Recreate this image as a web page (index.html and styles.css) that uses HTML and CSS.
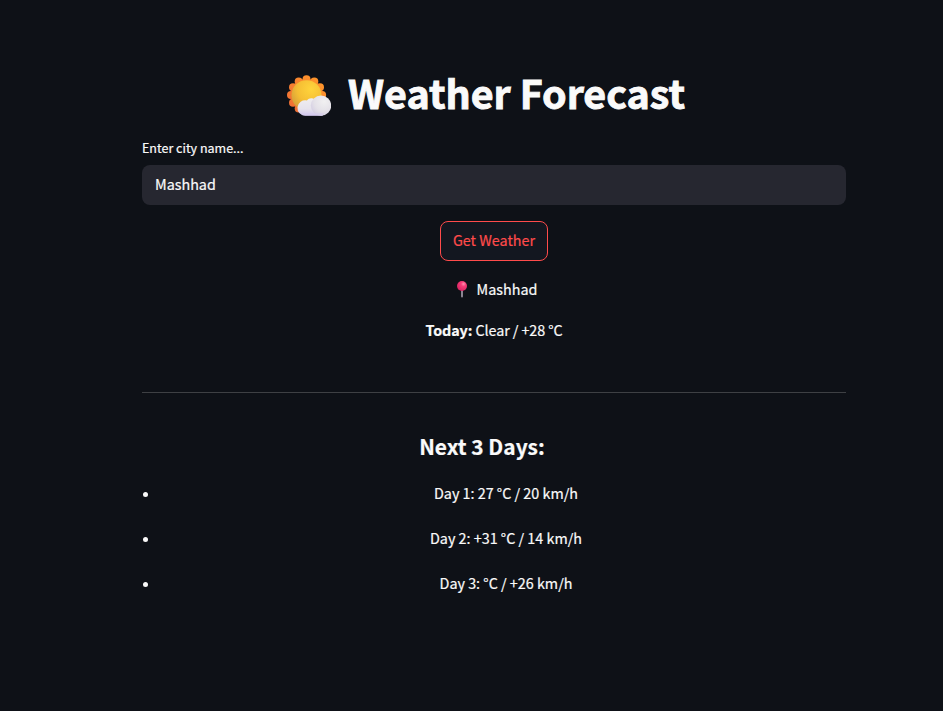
FILE: index.html
```html
<!DOCTYPE html>
<html lang="en">
<head>
<meta charset="utf-8">
<title>Weather Forecast</title>
<link rel="stylesheet" href="styles.css">
</head>
<body>
<main class="page">
  <h1 class="title">
    <svg class="sun" viewBox="0 0 44 42" aria-hidden="true">
      <defs>
        <radialGradient id="disc" cx=".65" cy=".3" r=".75"><stop offset="0" stop-color="#ffd43c"/><stop offset=".6" stop-color="#f5be34"/><stop offset="1" stop-color="#d5a03a"/></radialGradient>
        <linearGradient id="rays" gradientUnits="userSpaceOnUse" x1="4" y1="36" x2="34" y2="6"><stop offset="0" stop-color="#ef6c34"/><stop offset="1" stop-color="#ff962b"/></linearGradient>
        <linearGradient id="base" x1="0" y1="0" x2="0" y2="1"><stop offset="0" stop-color="#efedf1"/><stop offset=".6" stop-color="#e6e3ec"/><stop offset="1" stop-color="#d2c7ef"/></linearGradient>
        <radialGradient id="puff" cx=".65" cy=".3" r=".8"><stop offset="0" stop-color="#f1f0f1"/><stop offset=".6" stop-color="#e4e1e8"/><stop offset="1" stop-color="#d2cbe2"/></radialGradient>
      </defs>
      <g fill="url(#rays)">
        <circle cx="19.5" cy="20" r="16"/>
        <circle cx="19.5" cy="4.300" r="4"/><circle cx="27.300" cy="6.400" r="4"/><circle cx="33" cy="12.200" r="4"/><circle cx="35.100" cy="20" r="4"/><circle cx="11.700" cy="6.400" r="4"/><circle cx="6" cy="12.200" r="4"/><circle cx="4" cy="20" r="4"/><circle cx="6" cy="27.800" r="4"/><circle cx="11.700" cy="33.500" r="4"/>
      </g>
      <circle cx="19.5" cy="20.200" r="15" fill="url(#disc)"/>
      <path fill="url(#base)" d="M18.500 40.800A7.800 7.800 0 1 1 20 25.400C22 22.500 26 22.500 28 25L36 40.800Z"/>
      <circle cx="34" cy="30.600" r="10.200" fill="url(#puff)"/>
      <path fill="#d5cbed" d="M18 40.800H35L37 38H13C14.500 40 16 40.800 18 40.800Z" opacity=".5"/>
    </svg>
    <span class="title-text">Weather Forecast</span>
  </h1>
  <label class="label" for="city"><span class="t-label">Enter city name...</span></label>
  <div class="field" id="city"><span class="t-input">Mashhad</span></div>
  <button class="button" type="button"><span class="t-button">Get Weather</span></button>
  <p class="line place">
    <svg class="pin" viewBox="0 0 10 17" aria-hidden="true">
      <defs><radialGradient id="ball" cx=".65" cy=".3" r=".7"><stop offset="0" stop-color="#ff91b0"/><stop offset=".35" stop-color="#f83d79"/><stop offset="1" stop-color="#d82562"/></radialGradient></defs>
      <rect x="4" y="8" width="2" height="8.500" rx="1" fill="#8b8592"/>
      <circle cx="5" cy="5" r="5" fill="url(#ball)"/>
    </svg>
    <span class="t-place">Mashhad</span>
  </p>
  <p class="line"><span class="t-today"><strong>Today:</strong> Clear / +28 °C</span></p>
  <hr class="rule">
  <h2 class="subtitle"><span class="t-sub">Next 3 Days:</span></h2>
  <ul class="days">
    <li class="day"><span class="t-day">Day 1: 27 °C / 20 km/h</span></li>
    <li class="day"><span class="t-day">Day 2: +31 °C / 14 km/h</span></li>
    <li class="day"><span class="t-day">Day 3: °C / +26 km/h</span></li>
  </ul>
</main>
</body>
</html>
```
FILE: styles.css
```css
* { box-sizing: border-box; }
body {
  margin: 0;
  min-height: 711px;
  background: #0e1117;
  color: #fafafa;
  font-family: "Noto Sans CJK SC", "Open Sans", sans-serif;
  font-size: 14.35px;
  line-height: 24px;
  white-space: nowrap;
  -webkit-text-stroke: 0.2px;
}
.page { width: 704px; margin-left: 142px; padding-top: 68px; }
.title {
  display: flex;
  justify-content: center;
  align-items: center;
  gap: 17px;
  height: 54px;
  margin: 0;
  padding-right: 16px;
  font-size: 39.4px;
  line-height: 54px;
  font-weight: 700;
  -webkit-text-stroke: 0.9px;
}
.title-text { padding-bottom: 6px; }
.sun { width: 44px; height: 42px; flex: none; margin-top: 1px; -webkit-text-stroke: 0; }
.label { display: block; height: 24px; margin-top: 14px; font-size: 12.5px; }
.field {
  height: 40px;
  margin-top: 5px;
  padding: 7px 13px;
  border-radius: 8px;
  background: #262730;
}
.button {
  display: flex;
  justify-content: center;
  align-items: center;
  width: 108px;
  height: 40px;
  margin: 16px auto 0;
  padding: 0 0 2px;
  border: 1px solid #ff4b4b;
  border-radius: 8px;
  background: #131720;
  color: #ff4b4b;
  font: inherit;
}
.line { display: flex; justify-content: center; align-items: center; height: 24px; margin: 16px 0 0; }
.place { gap: 10px; padding-left: 6px; }
.place + .line { margin-top: 17px; }
.pin { width: 10px; height: 17px; flex: none; }
.line .t-today { white-space: pre; letter-spacing: -0.08px; }
.rule { height: 1px; margin: 50px 0 0; border: 0; background: #3e4044; }
.subtitle {
  height: 34px;
  margin: 36px 0 0;
  padding-right: 24px;
  font-size: 20.9px;
  line-height: 34px;
  font-weight: 700;
  text-align: center;
}
.days { margin: 18px 0 0; padding: 0; list-style: none; }
.day { display: flex; align-items: center; height: 24px; margin-bottom: 21px; }
.day::before { content: ""; flex: none; width: 5px; height: 5px; margin: 3px 18px 0 1px; border-radius: 50%; background: #fafafa; }
.t-day { flex: 1; text-align: center; }
```
